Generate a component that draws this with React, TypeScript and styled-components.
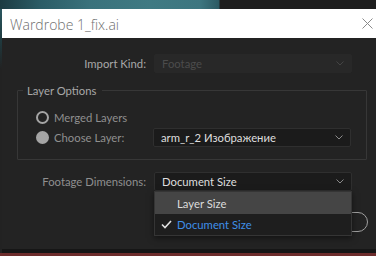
import React from "react";
import styled, { createGlobalStyle } from "styled-components";

const GlobalStyle = createGlobalStyle`
  html, body {
    margin: 0;
    padding: 0;
    background: #1e1e1e;
  }
  * { box-sizing: border-box; }
`;

const Screen = styled.div`
  width: 376px;
  height: 256px;
  overflow: hidden;
  display: flex;
  flex-direction: column;
  background: #1c1c1c;
  font-family: Lato, "Noto Sans", sans-serif;
`;

const Backdrop = styled.div`
  height: 9px;
  flex-shrink: 0;
  background: linear-gradient(
    90deg,
    #1c3b42 0px,
    #2b5c66 40px,
    #3a727c 90px,
    #3f7a83 150px,
    #3d7680 200px,
    #2c5a63 219px,
    #1e1e1e 220px
  );
`;

const Desk = styled.div`
  display: flex;
  flex: 1;
`;

const EdgeStrip = styled.div`
  width: 2px;
  flex-shrink: 0;
  background: linear-gradient(180deg, #2b5760 0px, #1f3b40 30px, #222 60px, #222 100%);
`;

const Dialog = styled.div`
  flex: 1;
  display: flex;
  flex-direction: column;
`;

const TitleBar = styled.div`
  height: 29px;
  flex-shrink: 0;
  background: #ffffff;
  display: flex;
  align-items: center;
  justify-content: space-between;
  padding: 0 3px 0 8px;
`;

const Title = styled.span`
  font-family: "Open Sans", "Noto Sans", sans-serif;
  font-size: 14px;
  font-weight: 300;
  color: #6e6e6e;
  padding-top: 1px;
`;

const CloseButton = styled.button`
  width: 11px;
  height: 18px;
  border: 0;
  padding: 0;
  background: transparent;
  display: flex;
  align-items: center;
  justify-content: center;
`;

const Body = styled.div`
  flex: 1;
  position: relative;
  background: #232323;
  padding-top: 16px;
  display: flex;
  flex-direction: column;
  font-size: 11.3px;
`;

const Row = styled.div`
  display: flex;
  align-items: center;
  gap: 8px;
`;

const Label = styled.span<{ $dim?: boolean }>`
  width: 144px;
  text-align: right;
  color: ${(p) => (p.$dim ? "#a8a8a8" : "#8f8f8f")};
`;

const Select = styled.div<{ $disabled?: boolean }>`
  position: relative;
  width: 198px;
  height: 19px;
  display: flex;
  align-items: center;
  justify-content: space-between;
  padding: 0 7px;
  border-radius: 2px;
  background: ${(p) => (p.$disabled ? "#282828" : "#1b1b1b")};
  border: 1px solid ${(p) => (p.$disabled ? "#282828" : "#2f2f2f")};
  color: ${(p) => (p.$disabled ? "#4c4c4c" : "#dedede")};
`;

const Group = styled.fieldset`
  margin: 11px 9px 0 15px;
  padding: 11px 0 12px 18px;
  border: 1px solid #373737;
  border-radius: 1px;
`;

const Legend = styled.legend`
  margin-left: -13px;
  padding: 0 6px 0 4px;
  color: #a8a8a8;
`;

const OptionGrid = styled.div`
  display: grid;
  grid-template-columns: 117px 198px;
  grid-auto-rows: 19px;
  row-gap: 1px;
  align-items: center;
`;

const Radio = styled.label`
  display: flex;
  align-items: center;
  gap: 5px;
  color: #8f8f8f;
`;

const RadioDot = styled.span<{ $checked?: boolean }>`
  width: 13px;
  height: 13px;
  border-radius: 50%;
  flex-shrink: 0;
  border: 2px solid #a5a5a5;
  background: ${(p) => (p.$checked ? "#a5a5a5" : "transparent")};
`;

const FootageRow = styled(Row)`
  margin-top: 12px;
  position: relative;
`;

const Menu = styled.div`
  position: absolute;
  left: 152px;
  top: 19px;
  width: 198px;
  background: #1e1e1e;
  border: 1px solid #353535;
  box-shadow: 0 2px 6px rgba(0, 0, 0, 0.5);
  z-index: 5;
`;

const MenuItem = styled.div<{ $hover?: boolean; $selected?: boolean }>`
  height: ${(p) => (p.$hover ? "22px" : "21px")};
  display: flex;
  align-items: center;
  padding-left: 6px;
  gap: 4px;
  background: ${(p) => (p.$hover ? "#454545" : "#1e1e1e")};
  color: ${(p) => (p.$selected ? "#3f8fe8" : "#dcdcdc")};
`;

const Check = styled.span`
  width: 12px;
  display: flex;
  align-items: center;
`;

const ButtonRow = styled.div`
  display: flex;
  justify-content: flex-end;
  padding-right: 8px;
  margin-top: 21px;
`;

const PillButton = styled.button`
  width: 80px;
  height: 20px;
  border: 1.5px solid #a0a0a0;
  border-radius: 10px;
  background: transparent;
`;

const BottomEdge = styled.div`
  height: 4px;
  flex-shrink: 0;
  background: #161616;
`;

const RedStrip = styled.div`
  height: 3px;
  flex-shrink: 0;
  background: #6d2d2c;
`;

const Chevron = ({ color = "#8a8a8a" }: { color?: string }) => (
  <svg width="8" height="5" viewBox="0 0 8 5">
    <path d="M0.5 0.5 L4 4 L7.5 0.5" fill="none" stroke={color} strokeWidth="1" />
  </svg>
);

export default function App() {
  return (
    <>
      <GlobalStyle />
      <Screen>
        <Backdrop />
        <Desk>
          <EdgeStrip />
          <Dialog>
            <TitleBar>
              <Title>Wardrobe 1_fix.ai</Title>
              <CloseButton aria-label="Close">
                <svg width="11" height="11" viewBox="0 0 11 11">
                  <path d="M0.5 0.5 L10.5 10.5 M10.5 0.5 L0.5 10.5" stroke="#8a8a8a" strokeWidth="1" />
                </svg>
              </CloseButton>
            </TitleBar>
            <Body>
              <Row>
                <Label $dim>Import Kind:</Label>
                <Select $disabled>
                  <span>Footage</span>
                  <Chevron color="#444" />
                </Select>
              </Row>

              <Group>
                <Legend>Layer Options</Legend>
                <OptionGrid>
                  <Radio>
                    <RadioDot />
                    Merged Layers
                  </Radio>
                  <span />
                  <Radio>
                    <RadioDot $checked />
                    Choose Layer:
                  </Radio>
                  <Select>
                    <span>arm_r_2 Изображение</span>
                    <Chevron />
                  </Select>
                </OptionGrid>
              </Group>

              <FootageRow>
                <Label>Footage Dimensions:</Label>
                <Select>
                  <span>Document Size</span>
                  <Chevron />
                </Select>
                <Menu>
                  <MenuItem $hover>
                    <Check />
                    Layer Size
                  </MenuItem>
                  <MenuItem $selected>
                    <Check>
                      <svg width="11" height="9" viewBox="0 0 11 9">
                        <path d="M1 4.5 L4 7.5 L10 1" fill="none" stroke="#e0e0e0" strokeWidth="1.6" />
                      </svg>
                    </Check>
                    Document Size
                  </MenuItem>
                </Menu>
              </FootageRow>

              <ButtonRow>
                <PillButton />
              </ButtonRow>
            </Body>
            <BottomEdge />
          </Dialog>
        </Desk>
        <RedStrip />
      </Screen>
    </>
  );
}
